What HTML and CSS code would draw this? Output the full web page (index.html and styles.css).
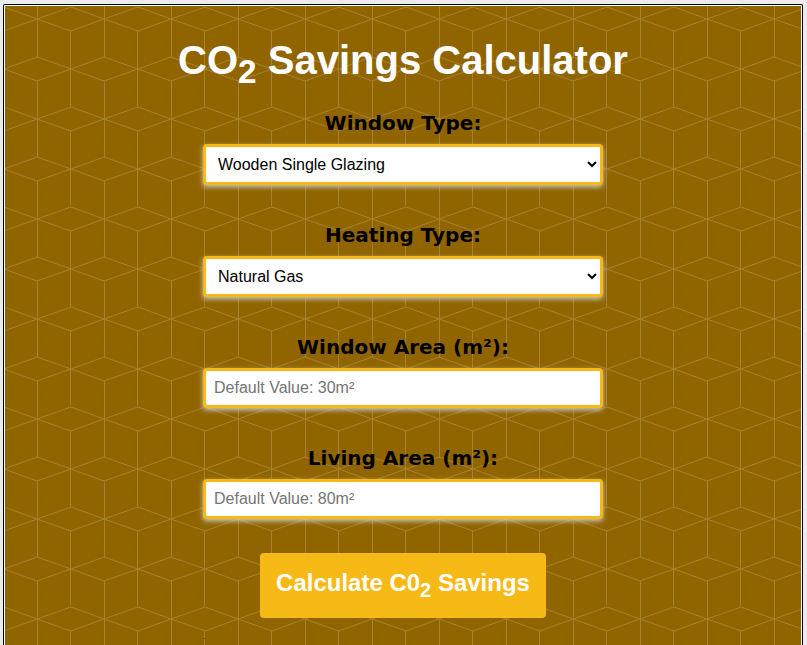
FILE: index.html
```html
<!DOCTYPE html>
<html lang="en">
<head>
<meta charset="utf-8">
<meta name="viewport" content="width=device-width, initial-scale=1">
<title>CO2 Savings Calculator</title>
<link rel="stylesheet" href="styles.css">
</head>
<body>
<main class="frame">
  <form class="calculator">
    <h1 class="title">CO<sub>2</sub> Savings Calculator</h1>
    <div class="field">
      <label for="window-type">Window Type:</label>
      <select id="window-type" class="control">
        <option>Wooden Single Glazing</option>
      </select>
    </div>
    <div class="field">
      <label for="heating-type">Heating Type:</label>
      <select id="heating-type" class="control">
        <option>Natural Gas</option>
      </select>
    </div>
    <div class="field">
      <label for="window-area">Window Area (m²):</label>
      <input id="window-area" class="control" type="text" placeholder="Default Value: 30m²">
    </div>
    <div class="field">
      <label for="living-area">Living Area (m²):</label>
      <input id="living-area" class="control" type="text" placeholder="Default Value: 80m²">
    </div>
    <button class="submit" type="button">Calculate C0<sub>2</sub> Savings</button>
    <p class="result">.</p>
  </form>
</main>
</body>
</html>
```

FILE: styles.css
```css
* {
  box-sizing: border-box;
}

body {
  margin: 0;
  padding: 4px 4px 0 3px;
  background: #ebebeb;
  color: #000;
  font-family: "Liberation Sans", Arial, sans-serif;
}

.frame {
  min-height: calc(100vh - 4px);
  padding: 1px 1px 0;
  border: 1px solid #000;
  border-bottom: 0;
  border-radius: 2px 2px 0 0;
  background: #fff;
}

/* Repeating 67 x 100 cube lattice */
.calculator {
  display: flex;
  flex-direction: column;
  align-items: center;
  min-height: calc(100vh - 6px);
  padding-top: 30px;
  background-color: #906500;
  background-image: url("data:image/svg+xml,%3Csvg xmlns='http://www.w3.org/2000/svg' width='67' height='100'%3E%3Cpath fill='none' stroke='%23a68130' d='M-1 1L32 13L66 1L99 13M-1 25L32 13L66 25L99 13M-1 63L32 51L66 63L99 51M-1 63L32 75L66 63L99 75M32.500 0V51M32.500 75V100M65.500 25V101'/%3E%3C/svg%3E");
}

.title {
  margin: 0 0 27px;
  color: #fff;
  font-size: 40px;
  line-height: 48px;
}

sub {
  line-height: 0;
}

.field {
  display: flex;
  flex-direction: column;
  align-items: center;
  gap: 9px;
  width: 100%;
  max-width: 400px;
  margin-bottom: 38px;
}

.field label {
  font-family: "Arial Black", "DejaVu Sans", sans-serif;
  font-size: 20px;
  font-weight: 900;
  line-height: 24px;
}

.control {
  width: 100%;
  height: 40px;
  padding: 8px;
  border: 3px solid #f7b916;
  border-radius: 4px;
  background-color: #fff;
  box-shadow: 0 2px 5px #ccc;
  color: #000;
  font-family: inherit;
  font-size: 16px;
}

select.control {
  height: 41px;
}

.control::placeholder {
  color: #757575;
}

.submit {
  height: 65px;
  margin-top: -4px;
  padding: 0 16px 6px;
  border: 0;
  border-radius: 4px;
  background: #f7b916;
  color: #fff;
  font-family: inherit;
  font-size: 24px;
  font-weight: bold;
}

.result {
  width: 100%;
  max-width: 400px;
  margin: 14px 0 0;
  font-size: 8px;
  line-height: 10px;
}
```
